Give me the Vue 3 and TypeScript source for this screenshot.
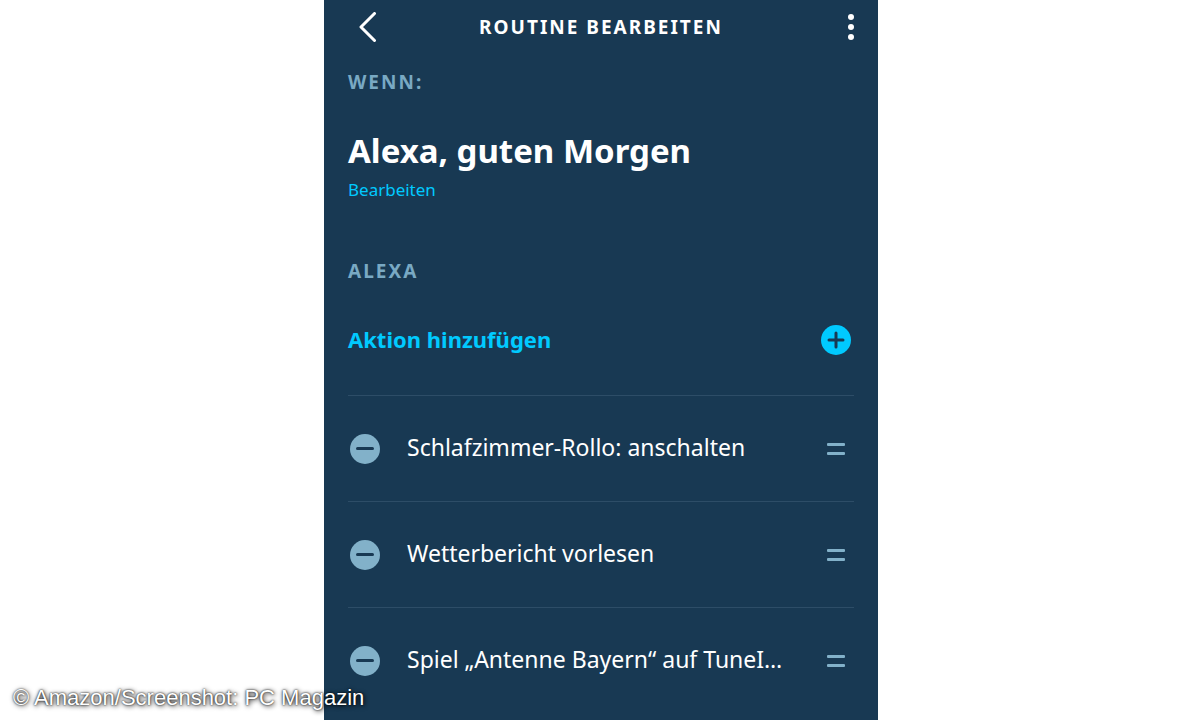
<script setup lang="ts">
import { ref } from 'vue'

interface Action {
  id: number
  label: string
}

const actions = ref<Action[]>([
  { id: 1, label: 'Schlafzimmer-Rollo: anschalten' },
  { id: 2, label: 'Wetterbericht vorlesen' },
  { id: 3, label: 'Spiel „Antenne Bayern“ auf TuneI…' },
])

function removeAction(id: number): void {
  actions.value = actions.value.filter((action) => action.id !== id)
}
</script>

<template>
  <div class="page">
    <main class="panel">
      <header class="bar">
        <button class="icon-button" type="button" aria-label="Zurück">
          <svg width="18" height="30" viewBox="0 0 18 30" fill="none" stroke="#fff" stroke-width="3" stroke-linecap="round" stroke-linejoin="round">
            <path d="M15.500 1.500L2 15L15.500 28.500" />
          </svg>
        </button>
        <h1 class="title">Routine bearbeiten</h1>
        <button class="icon-button" type="button" aria-label="Weitere Optionen">
          <svg width="6" height="28" viewBox="0 0 6 28" fill="#fff">
            <circle cx="3" cy="4" r="3" />
            <circle cx="3" cy="14" r="3" />
            <circle cx="3" cy="24" r="3" />
          </svg>
        </button>
      </header>

      <section class="trigger">
        <h2 class="label">Wenn:</h2>
        <p class="phrase">Alexa, guten Morgen</p>
        <a class="edit" href="#">Bearbeiten</a>
      </section>

      <section class="actions">
        <h2 class="label">Alexa</h2>
        <button class="add" type="button">
          <span>Aktion hinzufügen</span>
          <svg width="30" height="30" viewBox="0 0 30 30">
            <circle cx="15" cy="15" r="15" fill="#00caff" />
            <path d="M15 8V22M8 15H22" stroke="#183953" stroke-width="3" stroke-linecap="round" />
          </svg>
        </button>
        <ul class="list">
          <li v-for="action in actions" :key="action.id" class="row">
            <button class="icon-button" type="button" :aria-label="`${action.label} entfernen`" @click="removeAction(action.id)">
              <svg width="30" height="30" viewBox="0 0 30 30">
                <circle cx="15" cy="15" r="15" fill="#82b1c9" />
                <path d="M7.500 14.500H22.500" stroke="#183953" stroke-width="3" stroke-linecap="round" />
              </svg>
            </button>
            <span class="name">{{ action.label }}</span>
            <button class="icon-button" type="button" :aria-label="`${action.label} verschieben`">
              <svg width="18" height="12" viewBox="0 0 18 12" fill="#82b1c9">
                <rect width="18" height="3" rx="1" />
                <rect y="9" width="18" height="3" rx="1" />
              </svg>
            </button>
          </li>
        </ul>
      </section>
    </main>
    <p class="credit">© Amazon/Screenshot: PC Magazin</p>
  </div>
</template>

<style>
body {
  margin: 0;
  background: #fff;
}
</style>

<style scoped>
.page {
  position: relative;
  min-height: 100vh;
  box-sizing: border-box;
  padding-left: 2px;
  display: flex;
  justify-content: center;
  font-family: "Noto Sans", sans-serif;
  color: #fff;
}

.panel {
  flex: 0 1 554px;
  min-width: 0;
  box-sizing: border-box;
  padding: 0 24px;
  background: #183953;
}

h1,
h2,
p {
  margin: 0;
}

button {
  margin: 0;
  padding: 0;
  border: 0;
  background: none;
  font: inherit;
  color: inherit;
  cursor: pointer;
}

svg {
  display: block;
}

.bar {
  display: grid;
  grid-template-columns: 44px 1fr 44px;
  align-items: center;
  height: 54px;
}

.bar .icon-button {
  justify-self: start;
  padding-left: 11px;
}

.bar .icon-button:last-child {
  justify-self: end;
  padding: 0;
}

.title,
.label {
  font-size: 19px;
  line-height: 28px;
  font-weight: 700;
  letter-spacing: 2px;
  text-transform: uppercase;
}

.title {
  text-align: center;
}

.label {
  color: #79a9c3;
}

.trigger {
  padding-top: 14px;
}

.phrase {
  margin-top: 32px;
  font-size: 33px;
  line-height: 46px;
  font-weight: 700;
}

.edit {
  display: block;
  margin-top: 4px;
  font-size: 17px;
  line-height: 24px;
  color: #00caff;
  text-decoration: none;
}

.actions {
  padding-top: 55px;
}

.add {
  display: flex;
  align-items: center;
  justify-content: space-between;
  width: 100%;
  height: 110px;
  padding-right: 3px;
  font-size: 22px;
  line-height: 32px;
  font-weight: 700;
  color: #00caff;
}

.add span {
  padding-bottom: 2px;
}

.list {
  margin: 0;
  padding: 0;
  list-style: none;
}

.row {
  display: flex;
  align-items: center;
  height: 105px;
  padding: 0 9px 0 2px;
  border-top: 1px solid #2d4d67;
}

.name {
  flex: 1;
  min-width: 0;
  padding: 0 24px 4px 27px;
  font-size: 23px;
  line-height: 32px;
  white-space: nowrap;
}

.credit {
  position: absolute;
  left: 13px;
  bottom: 8px;
  font-family: "Liberation Sans", Arial, sans-serif;
  font-size: 22px;
  line-height: 28px;
  text-shadow: 0 0 2px #000, 1px 1px 5px #000;
}
</style>
